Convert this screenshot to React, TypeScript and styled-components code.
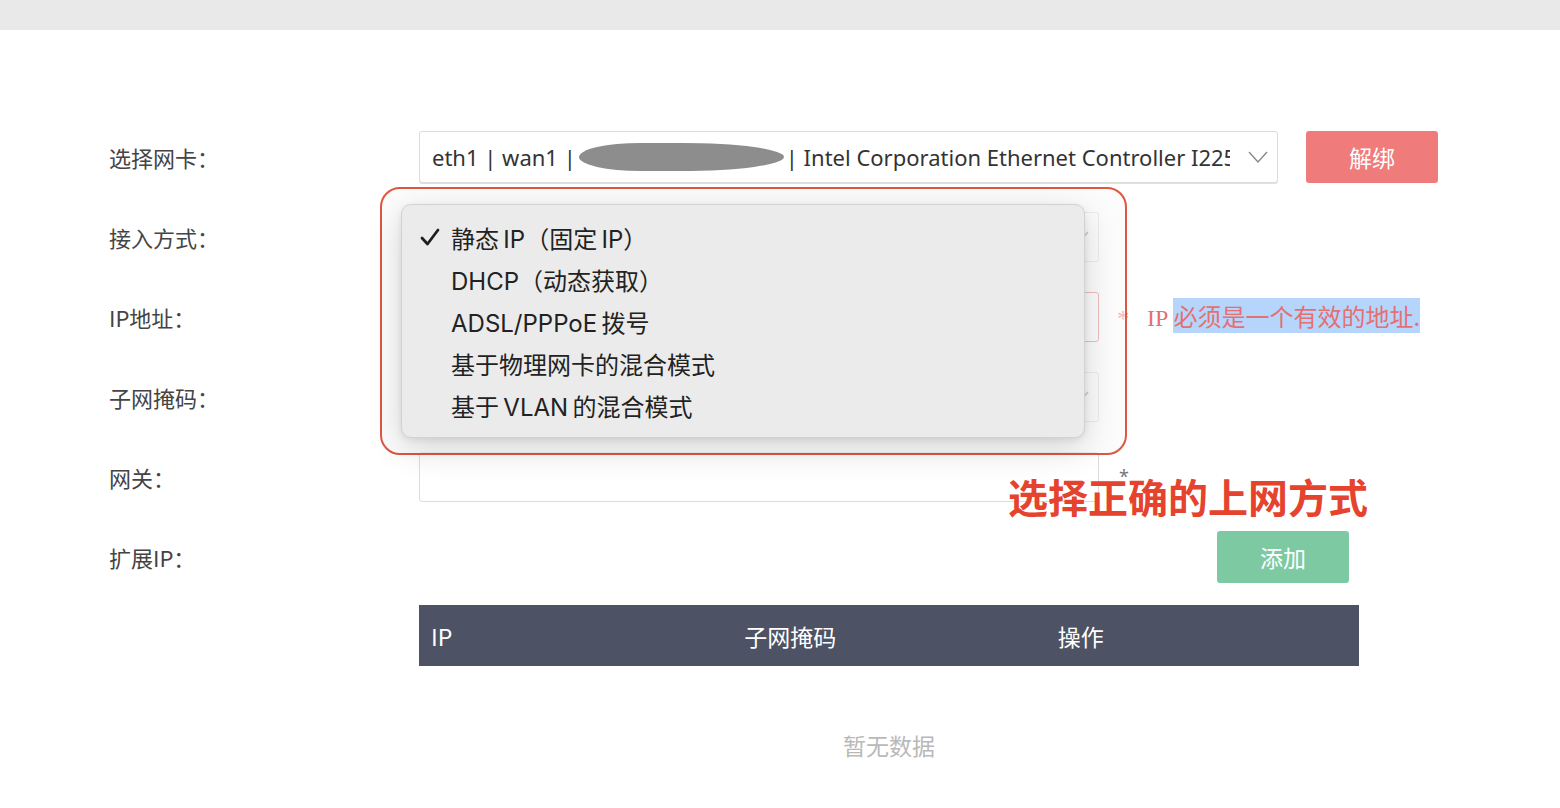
import styled, { createGlobalStyle } from "styled-components";

const GlobalStyle = createGlobalStyle`
  html, body {
    margin: 0;
    padding: 0;
    background: #fff;
  }
  body {
    font-family: "Noto Sans", "Noto Sans CJK SC", sans-serif;
    color: #444;
  }
`;

const menuItems = [
  "静态\u2009IP（固定\u2009IP）",
  "DHCP（动态获取）",
  "ADSL/PPPoE\u2009拨号",
  "基于物理网卡的混合模式",
  "基于\u2009VLAN\u2009的混合模式",
];

const Chevron = () => (
  <ChevronIcon viewBox="0 0 20 12">
    <path d="M1 1 L10 11 L19 1" fill="none" stroke="#8a8a8a" strokeWidth="1.4" />
  </ChevronIcon>
);

const Check = () => (
  <svg width="20" height="18" viewBox="0 0 20 18">
    <path d="M2 10 L7.5 16 L18 2" fill="none" stroke="#1f1f1f" strokeWidth="2.8" strokeLinecap="round" strokeLinejoin="round" />
  </svg>
);

const App = () => {
  return (
    <Page>
      <GlobalStyle />
      <TopBar />
      <Form>
        <Row>
          <Label>选择网卡：</Label>
          <Field>
            <Box $wide>
              <BoxText>
                eth1 | wan1 |<Redacted />| Intel Corporation Ethernet Controller I225-V
              </BoxText>
              <Chevron />
            </Box>
            <Button $tone="danger">解绑</Button>
          </Field>
        </Row>

        <Row>
          <Label>接入方式：</Label>
          <Field>
            <Box>
              <BoxText>静态 IP（固定 IP）</BoxText>
              <Chevron />
            </Box>
            <Callout />
            <Menu>
              {menuItems.map((item, i) => (
                <MenuItem key={item}>
                  <CheckSlot>{i === 0 && <Check />}</CheckSlot>
                  {item}
                </MenuItem>
              ))}
            </Menu>
          </Field>
        </Row>

        <Row>
          <Label>IP地址：</Label>
          <Field>
            <Box $invalid />
            <ErrorText>
              *&nbsp;&nbsp;&nbsp;IP <Selected>必须是一个有效的地址.</Selected>
            </ErrorText>
          </Field>
        </Row>

        <Row>
          <Label>子网掩码：</Label>
          <Field>
            <Box>
              <BoxText />
              <Chevron />
            </Box>
          </Field>
        </Row>

        <Row>
          <Label>网关：</Label>
          <Field>
            <Box />
            <Required>*</Required>
            <Hint>选择正确的上网方式</Hint>
          </Field>
        </Row>

        <Row>
          <Label>扩展IP：</Label>
          <AddBar>
            <Button $tone="success">添加</Button>
          </AddBar>
        </Row>

        <Table>
          <TableHead>
            <HeadCell>IP</HeadCell>
            <HeadCell>子网掩码</HeadCell>
            <HeadCell>操作</HeadCell>
          </TableHead>
          <Empty>暂无数据</Empty>
        </Table>
      </Form>
    </Page>
  );
};

const Page = styled.div`
  min-height: 808px;
  background: #fff;
`;

const TopBar = styled.div`
  height: 30px;
  background: #e9e9e9;
`;

const Form = styled.div`
  padding: 87px 0 0 109px;
`;

const Row = styled.div`
  display: grid;
  grid-template-columns: 310px 1fr;
  align-items: center;
  height: 80px;
`;

const Label = styled.div`
  font-size: 22px;
  color: #444;
  font-family: "Noto Sans CJK SC", sans-serif;
`;

const Field = styled.div`
  position: relative;
  display: flex;
  align-items: center;
`;

const Box = styled.div<{ $wide?: boolean; $invalid?: boolean }>`
  box-sizing: border-box;
  width: ${(p) => (p.$wide ? 859 : 680)}px;
  height: ${(p) => (p.$wide ? 52 : 50)}px;
  border: 1px solid ${(p) => (p.$invalid ? "#e27676" : "#dcdcdc")};
  border-radius: 3px;
  background: #fff;
  padding: 0 9px 0 12px;
  display: flex;
  align-items: center;
  font-size: 22px;
  color: #333;
  box-shadow: ${(p) => (p.$wide ? "0 1px 0 #d3e3f3" : "none")};
`;

const BoxText = styled.div`
  flex: 1;
  white-space: nowrap;
  overflow: hidden;
  display: flex;
  align-items: center;
`;

const Redacted = styled.span`
  display: inline-block;
  width: 205px;
  height: 28px;
  margin: 0 2px 0 3px;
  background: #8d8d8d;
  border-radius: 30% 50% 50% 30% / 50%;
  flex-shrink: 0;
`;

const ChevronIcon = styled.svg`
  width: 20px;
  height: 12px;
  margin-left: 18px;
  flex-shrink: 0;
`;

const Button = styled.button<{ $tone: "danger" | "success" }>`
  width: 132px;
  height: 52px;
  margin-left: 28px;
  border: none;
  border-radius: 3px;
  background: ${(p) => (p.$tone === "danger" ? "#ef7b7b" : "#7dcaa2")};
  color: #fff;
  font-size: 23px;
  font-family: "Noto Sans CJK SC", sans-serif;
`;

const ErrorText = styled.div`
  margin-left: 18px;
  font-size: 24px;
  line-height: 28px;
  color: #e47070;
  font-family: "Liberation Serif", "Noto Sans CJK SC", serif;
  white-space: nowrap;
`;

const Selected = styled.span`
  background: #b5d5fc;
  font-family: "Noto Sans CJK SC", sans-serif;
  font-size: 24px;
`;

const Required = styled.span`
  align-self: flex-start;
  margin: 12px 0 0 20px;
  font-size: 18px;
  color: #777;
`;

const Hint = styled.div`
  position: absolute;
  left: 589px;
  top: 24px;
  font-size: 40px;
  line-height: 40px;
  font-weight: 700;
  color: #e5432e;
  font-family: "Noto Sans CJK SC", sans-serif;
  white-space: nowrap;
`;

const Callout = styled.div`
  position: absolute;
  left: -39px;
  top: -25px;
  width: 747px;
  height: 268px;
  box-sizing: border-box;
  border: 2px solid #df5641;
  border-radius: 20px;
  background: rgba(250, 250, 250, 0.55);
  z-index: 2;
`;

const Menu = styled.div`
  position: absolute;
  left: -18px;
  top: -8px;
  width: 684px;
  box-sizing: border-box;
  padding: 11px 0;
  background: #ebebeb;
  border: 1px solid #d2d2d2;
  border-radius: 10px;
  box-shadow: 0 10px 34px rgba(0, 0, 0, 0.16), 0 2px 6px rgba(0, 0, 0, 0.08);
  z-index: 3;
`;

const MenuItem = styled.div`
  display: flex;
  align-items: center;
  height: 42px;
  padding-left: 18px;
  font-size: 24px;
  color: #222;
  font-family: "Inter", "Noto Sans CJK SC", sans-serif;
  white-space: nowrap;
`;

const CheckSlot = styled.span`
  display: inline-flex;
  width: 31px;
  flex-shrink: 0;
`;

const AddBar = styled.div`
  width: 930px;
  display: flex;
  justify-content: flex-end;
`;

const Table = styled.div`
  width: 940px;
  margin: 8px 0 0 310px;
`;

const TableHead = styled.div`
  display: grid;
  grid-template-columns: repeat(3, 1fr);
  align-items: center;
  height: 61px;
  background: #4d5264;
`;

const HeadCell = styled.div`
  padding-left: 12px;
  font-size: 23px;
  color: #fff;
  font-family: "Noto Sans CJK SC", sans-serif;
`;

const Empty = styled.div`
  padding: 62px 0 40px;
  text-align: center;
  font-size: 23px;
  color: #b9b9b9;
  font-family: "Noto Sans CJK SC", sans-serif;
`;

export default App;
